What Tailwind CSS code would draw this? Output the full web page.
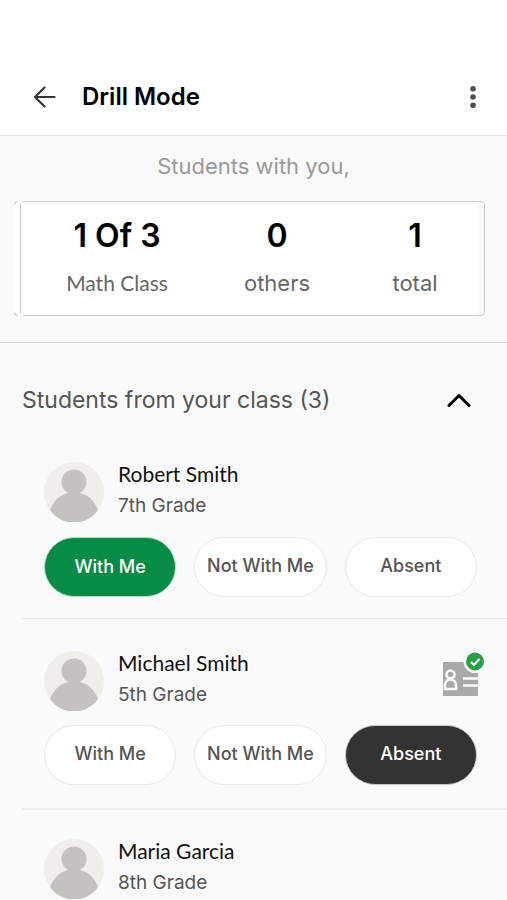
<!DOCTYPE html>
<html lang="en">
<head>
  <meta charset="UTF-8" />
  <meta name="viewport" content="width=device-width, initial-scale=1.0" />
  <title>Drill Mode</title>
  <script src="https://cdn.jsdelivr.net/npm/@tailwindcss/browser@4"></script>
</head>
<body class="bg-[#fafafa] font-['Inter',sans-serif] text-[#555]">

  <!-- Shared avatar -->
  <svg class="hidden">
    <symbol id="avatar" viewBox="0 0 60 60">
      <circle cx="30" cy="30" r="30" fill="#f0eeea" />
      <g fill="#c4c2be">
        <circle cx="30" cy="20" r="12.5" />
        <path d="M24 28h12v3c8 2 14 7 18 17A29 29 0 0 1 6 48c4-10 10-15 18-17z" />
      </g>
    </symbol>
  </svg>

  <!-- Header -->
  <header class="bg-white pt-[59px] border-b border-[#e8e8e8]">
    <div class="flex items-center h-[76px] pl-8 pr-[22px]">
      <button type="button" aria-label="Back" class="mr-[26px]">
        <svg class="block w-6 h-6" viewBox="0 0 24 24" fill="none" stroke="#333" stroke-width="2.2" stroke-linecap="round" stroke-linejoin="round">
          <path d="M22.500 12H3M12.500 2.500L3 12l9.500 9.500" />
        </svg>
      </button>
      <h1 class="flex-1 text-2xl font-semibold text-black">Drill Mode</h1>
      <button type="button" aria-label="More options">
        <svg class="block w-6 h-6" viewBox="0 0 24 24" fill="#505050">
          <circle cx="12" cy="3.800" r="2.800" />
          <circle cx="12" cy="12" r="2.800" />
          <circle cx="12" cy="20.200" r="2.800" />
        </svg>
      </button>
    </div>
  </header>

  <main>
    <!-- Summary -->
    <section class="pt-4 pb-[26px] border-b border-[#d6d6d6]">
      <p class="text-center text-[22px] leading-7 text-[#999]">Students with you,</p>
      <div class="relative mt-[21px] ml-[14px] mr-[22px] pl-[6px] bg-white rounded">
        <span class="absolute left-0 top-0 w-1 h-1 border-l border-t border-[#ccc] rounded-tl"></span>
        <span class="absolute left-0 bottom-0 w-1 h-1 border-l border-b border-[#ccc] rounded-bl"></span>
        <div class="border border-[#ccc] rounded pr-[7px] bg-[#fafafa]">
          <dl class="flex h-[113px] pt-[13px] pl-4 pr-1 text-center bg-white">
            <div class="flex flex-col-reverse justify-end gap-[10px] w-[160px]">
              <dt class="text-[21px] leading-8 font-['Lato',sans-serif] text-[#666]">Math Class</dt>
              <dd class="text-[32px] leading-[42px] font-semibold text-black">1 Of 3</dd>
            </div>
            <div class="flex flex-col-reverse justify-end gap-[10px] w-[160px]">
              <dt class="text-[22px] leading-8 text-[#666]">others</dt>
              <dd class="text-[32px] leading-[42px] font-semibold text-black">0</dd>
            </div>
            <div class="flex flex-col-reverse justify-end gap-[10px] flex-1">
              <dt class="text-[22px] leading-8 text-[#666]">total</dt>
              <dd class="text-[32px] leading-[42px] font-semibold text-black">1</dd>
            </div>
          </dl>
        </div>
      </div>
    </section>

    <!-- Class list -->
    <section class="pl-[22px]">
      <div class="flex items-center justify-between h-[114px] pr-9">
        <h2 class="text-[23px]">Students from your class (3)</h2>
        <button type="button" aria-label="Collapse list">
          <svg class="block w-6 h-6" viewBox="0 0 24 24" fill="none" stroke="#000" stroke-width="3" stroke-linecap="round" stroke-linejoin="round">
            <path d="M2 17.500L12 7.500l10 10" />
          </svg>
        </button>
      </div>

      <ul>
        <li class="pl-[22px] pr-[30px] pt-[5px] pb-[21px] border-b border-[#e6e6e6]">
          <div class="flex items-start gap-[14px]">
            <svg class="w-[60px] h-[60px]"><use href="#avatar" /></svg>
            <div>
              <h3 class="text-[21px] leading-6 font-['Lato',sans-serif] text-[#111]">Robert Smith</h3>
              <p class="mt-1 text-[19px] leading-8">7th Grade</p>
            </div>
          </div>
          <div class="grid grid-cols-3 gap-[18px] mt-[15px] text-lg font-medium">
            <button type="button" aria-pressed="true" class="h-[60px] rounded-full border border-[#b5e0c6] bg-[#068c45] text-white">With Me</button>
            <button type="button" class="h-[60px] pb-0.5 rounded-full border border-[#e8e8e8] bg-white whitespace-nowrap">Not With Me</button>
            <button type="button" class="h-[60px] pb-0.5 rounded-full border border-[#e8e8e8] bg-white">Absent</button>
          </div>
        </li>

        <li class="pl-[22px] pr-[30px] pt-8 pb-[23px] border-b-2 border-[#ececec]">
          <div class="flex items-start gap-[14px]">
            <svg class="w-[60px] h-[60px]"><use href="#avatar" /></svg>
            <div class="flex-1">
              <h3 class="text-[21px] leading-6 font-['Lato',sans-serif] text-[#111]">Michael Smith</h3>
              <p class="mt-1 text-[19px] leading-8">5th Grade</p>
            </div>
            <!-- ID card with check -->
            <svg class="-mr-2 w-[42px] h-[46px]" viewBox="0 0 42 46" role="img" aria-label="ID verified">
              <path d="M0 11h35v34H0z" fill="#a9a9a9" />
              <g fill="none" stroke="#fafafa" stroke-width="2.500">
                <circle cx="7.500" cy="23.500" r="4" />
                <path d="M2 38v-4a5.500 5.500 0 0 1 11 0v4z" />
                <path d="M20 27.500h15M20 34.500h15" />
              </g>
              <circle cx="32" cy="10.500" r="11.500" fill="#fafafa" />
              <circle cx="32" cy="10.500" r="9" fill="#27a148" />
              <path d="M28 11l3 3 5.500-6" fill="none" stroke="#fff" stroke-width="2.200" />
            </svg>
          </div>
          <div class="grid grid-cols-3 gap-[18px] mt-[14px] text-lg font-medium">
            <button type="button" class="h-[60px] pb-0.5 rounded-full border border-[#e8e8e8] bg-white">With Me</button>
            <button type="button" class="h-[60px] pb-0.5 rounded-full border border-[#e8e8e8] bg-white whitespace-nowrap">Not With Me</button>
            <button type="button" aria-pressed="true" class="h-[60px] pb-0.5 rounded-full border border-[#c8c8c8] bg-[#333] text-white">Absent</button>
          </div>
        </li>

        <li class="pl-[22px] pr-[30px] pt-[29px]">
          <div class="flex items-start gap-[14px]">
            <svg class="w-[60px] h-[60px]"><use href="#avatar" /></svg>
            <div>
              <h3 class="text-[21px] leading-6 font-['Lato',sans-serif] text-[#111]">Maria Garcia</h3>
              <p class="mt-1 text-[19px] leading-8">8th Grade</p>
            </div>
          </div>
        </li>
      </ul>
    </section>
  </main>

</body>
</html>
